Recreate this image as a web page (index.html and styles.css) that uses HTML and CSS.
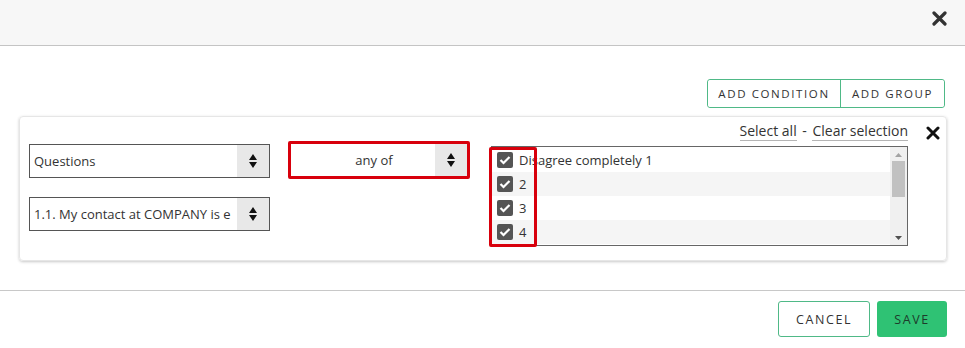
FILE: index.html
```html
<!DOCTYPE html>
<html lang="en">
<head>
    <meta charset="UTF-8">
    <title>Filter condition</title>
    <link rel="stylesheet" href="styles.css">
</head>
<body>

<div class="modal-header">
    <button class="icon-close header-close" aria-label="Close">
        <svg width="15" height="15" viewBox="0 0 15 15"><path d="M2 2L13 13M13 2L2 13" stroke="#333" stroke-width="3.2" stroke-linecap="round"/></svg>
    </button>
</div>

<div class="modal-body">
    <div class="toolbar">
        <div class="btn-group">
            <button class="btn-outline">ADD CONDITION</button>
            <button class="btn-outline">ADD GROUP</button>
        </div>
    </div>

    <div class="condition-card">
        <div class="col-left">
            <div class="select">
                <span class="select-value">Questions</span>
                <span class="select-arrows">
                    <svg width="10" height="16" viewBox="0 0 10 16"><path d="M5 1L9 7H1Z M1 9H9L5 15Z" fill="#111"/></svg>
                </span>
            </div>
            <div class="select">
                <span class="select-value">1.1. My contact at COMPANY is e</span>
                <span class="select-arrows">
                    <svg width="10" height="16" viewBox="0 0 10 16"><path d="M5 1L9 7H1Z M1 9H9L5 15Z" fill="#111"/></svg>
                </span>
            </div>
        </div>

        <div class="col-middle">
            <div class="highlight">
                <div class="select select-center">
                    <span class="select-value">any of</span>
                    <span class="select-arrows">
                        <svg width="10" height="16" viewBox="0 0 10 16"><path d="M5 1L9 7H1Z M1 9H9L5 15Z" fill="#111"/></svg>
                    </span>
                </div>
            </div>
        </div>

        <div class="col-right">
            <div class="list-links">
                <a href="#">Select all</a> <span class="dash">-</span> <a href="#">Clear selection</a>
            </div>
            <div class="listbox">
                <div class="list-rows">
                    <label class="row"><span class="check"><svg width="12" height="10" viewBox="0 0 12 10"><path d="M1.5 5L4.5 8L10.5 2" stroke="#fff" stroke-width="2.2" fill="none"/></svg></span>Disagree completely 1</label>
                    <label class="row alt"><span class="check"><svg width="12" height="10" viewBox="0 0 12 10"><path d="M1.5 5L4.5 8L10.5 2" stroke="#fff" stroke-width="2.2" fill="none"/></svg></span>2</label>
                    <label class="row"><span class="check"><svg width="12" height="10" viewBox="0 0 12 10"><path d="M1.5 5L4.5 8L10.5 2" stroke="#fff" stroke-width="2.2" fill="none"/></svg></span>3</label>
                    <label class="row alt"><span class="check"><svg width="12" height="10" viewBox="0 0 12 10"><path d="M1.5 5L4.5 8L10.5 2" stroke="#fff" stroke-width="2.2" fill="none"/></svg></span>4</label>
                </div>
                <div class="scrollbar">
                    <svg class="scroll-up" width="9" height="6" viewBox="0 0 9 6"><path d="M4.5 1L8 5H1Z" fill="#a3a3a3"/></svg>
                    <div class="scroll-thumb"></div>
                    <svg class="scroll-down" width="9" height="6" viewBox="0 0 9 6"><path d="M1 1H8L4.5 5Z" fill="#505050"/></svg>
                </div>
                <div class="check-highlight"></div>
            </div>
        </div>

        <button class="icon-close card-close" aria-label="Remove">
            <svg width="14" height="14" viewBox="0 0 14 14"><path d="M2 2L12 12M12 2L2 12" stroke="#111" stroke-width="3" stroke-linecap="round"/></svg>
        </button>
    </div>
</div>

<div class="modal-footer">
    <button class="btn-outline btn-cancel">CANCEL</button>
    <button class="btn-save">SAVE</button>
</div>

</body>
</html>
```

FILE: styles.css
```css
body {
    margin: 0;
    padding: 0;
    font-family: "Open Sans", Arial, sans-serif;
    font-size: 13px;
    color: #333;
    background-color: #fff;
    width: 965px;
    height: 348px;
    overflow: hidden;
}

button {
    font-family: inherit;
    cursor: pointer;
}

.icon-close {
    border: none;
    background: none;
    padding: 0;
    display: flex;
}

/* --- header --- */
.modal-header {
    height: 46px;
    background-color: #f7f7f7;
    border-bottom: 1px solid #c4c4c4;
    box-sizing: border-box;
    display: flex;
    justify-content: flex-end;
    align-items: flex-start;
    padding: 11px 18px 0 0;
}

/* --- body --- */
.modal-body {
    height: 245px;
    padding: 33px 18px 0 19px;
    box-sizing: border-box;
    border-bottom: 1px solid #c8c8c8;
}

.toolbar {
    display: flex;
    justify-content: flex-end;
    padding-right: 2px;
}

.btn-group {
    display: flex;
    border: 1px solid #4fb987;
    border-radius: 3px;
    height: 29px;
    box-sizing: border-box;
}

.btn-outline {
    background: #fff;
    border: none;
    color: #333;
    font-size: 11.5px;
    letter-spacing: 1.6px;
    padding: 0 10px;
}

.btn-group .btn-outline:first-child {
    width: 133px;
    border-right: 1px solid #4fb987;
    border-radius: 3px 0 0 3px;
}

.btn-group .btn-outline:last-child {
    width: 103px;
    border-radius: 0 3px 3px 0;
}

.condition-card {
    position: relative;
    margin-top: 8px;
    height: 145px;
    box-sizing: border-box;
    border: 1px solid #e6e6e6;
    border-radius: 4px;
    box-shadow: 0 1px 3px rgba(0, 0, 0, 0.22);
    display: flex;
    align-items: flex-start;
    padding: 4px 0 0 9px;
}

.col-left {
    display: flex;
    flex-direction: column;
    gap: 19px;
    margin-top: 23px;
    width: 241px;
}

.select {
    display: flex;
    height: 34px;
    border: 1px solid #555;
    box-sizing: border-box;
    background: #fff;
}

.select-value {
    flex: 1;
    padding-left: 4px;
    line-height: 32px;
    white-space: nowrap;
    overflow: hidden;
}

.select-arrows {
    width: 32px;
    background-color: #e8e8e8;
    display: flex;
    align-items: center;
    justify-content: center;
}

.col-middle {
    margin-left: 18px;
    margin-top: 20px;
}

.highlight {
    border: 3px solid #d8000c;
    border-radius: 2px;
    width: 182px;
    box-sizing: border-box;
}

.highlight .select {
    border: none;
    height: 32px;
}

.select-center .select-value {
    text-align: center;
    padding-left: 22px;
}

.col-right {
    margin-left: 21px;
    width: 417px;
}

.list-links {
    text-align: right;
    height: 25px;
    line-height: 20px;
    font-size: 14px;
}

.list-links a {
    color: #333;
    text-decoration: none;
    display: inline-block;
    border-bottom: 1px solid #b5b5b5;
    line-height: 19px;
}

.dash {
    margin: 0 2px;
}

.listbox {
    position: relative;
    display: flex;
    border: 1px solid #666;
    height: 100px;
    box-sizing: border-box;
}

.list-rows {
    flex: 1;
    padding-top: 1px;
}

.row {
    display: flex;
    align-items: center;
    height: 24px;
    padding-left: 5px;
    white-space: nowrap;
}

.row.alt {
    background-color: #f5f5f5;
}

.check {
    width: 16px;
    height: 16px;
    border-radius: 2px;
    background-color: #555;
    display: flex;
    align-items: center;
    justify-content: center;
    margin-right: 6px;
}

.scrollbar {
    width: 17px;
    background-color: #f0f0f0;
    display: flex;
    flex-direction: column;
    align-items: center;
}

.scroll-up {
    margin-top: 5px;
}

.scroll-thumb {
    width: 13px;
    height: 36px;
    margin-top: 3px;
    background-color: #c1c1c1;
}

.scroll-down {
    margin-top: auto;
    margin-bottom: 4px;
}

.check-highlight {
    position: absolute;
    left: -3px;
    top: 0;
    width: 48px;
    height: 100px;
    box-sizing: border-box;
    border: 3px solid #d8000c;
    border-radius: 2px;
}

.card-close {
    margin-left: 18px;
    margin-top: 5px;
}

/* --- footer --- */
.modal-footer {
    display: flex;
    justify-content: flex-end;
    gap: 7px;
    padding: 10px 18px 0 0;
}

.btn-cancel {
    width: 92px;
    height: 36px;
    border: 1px solid #4fb987;
    border-radius: 3px;
    font-size: 12.5px;
}

.btn-save {
    width: 70px;
    height: 36px;
    border: none;
    border-radius: 3px;
    background-color: #2fc274;
    color: #1d3b2b;
    font-size: 12.5px;
    letter-spacing: 1.6px;
}
```
